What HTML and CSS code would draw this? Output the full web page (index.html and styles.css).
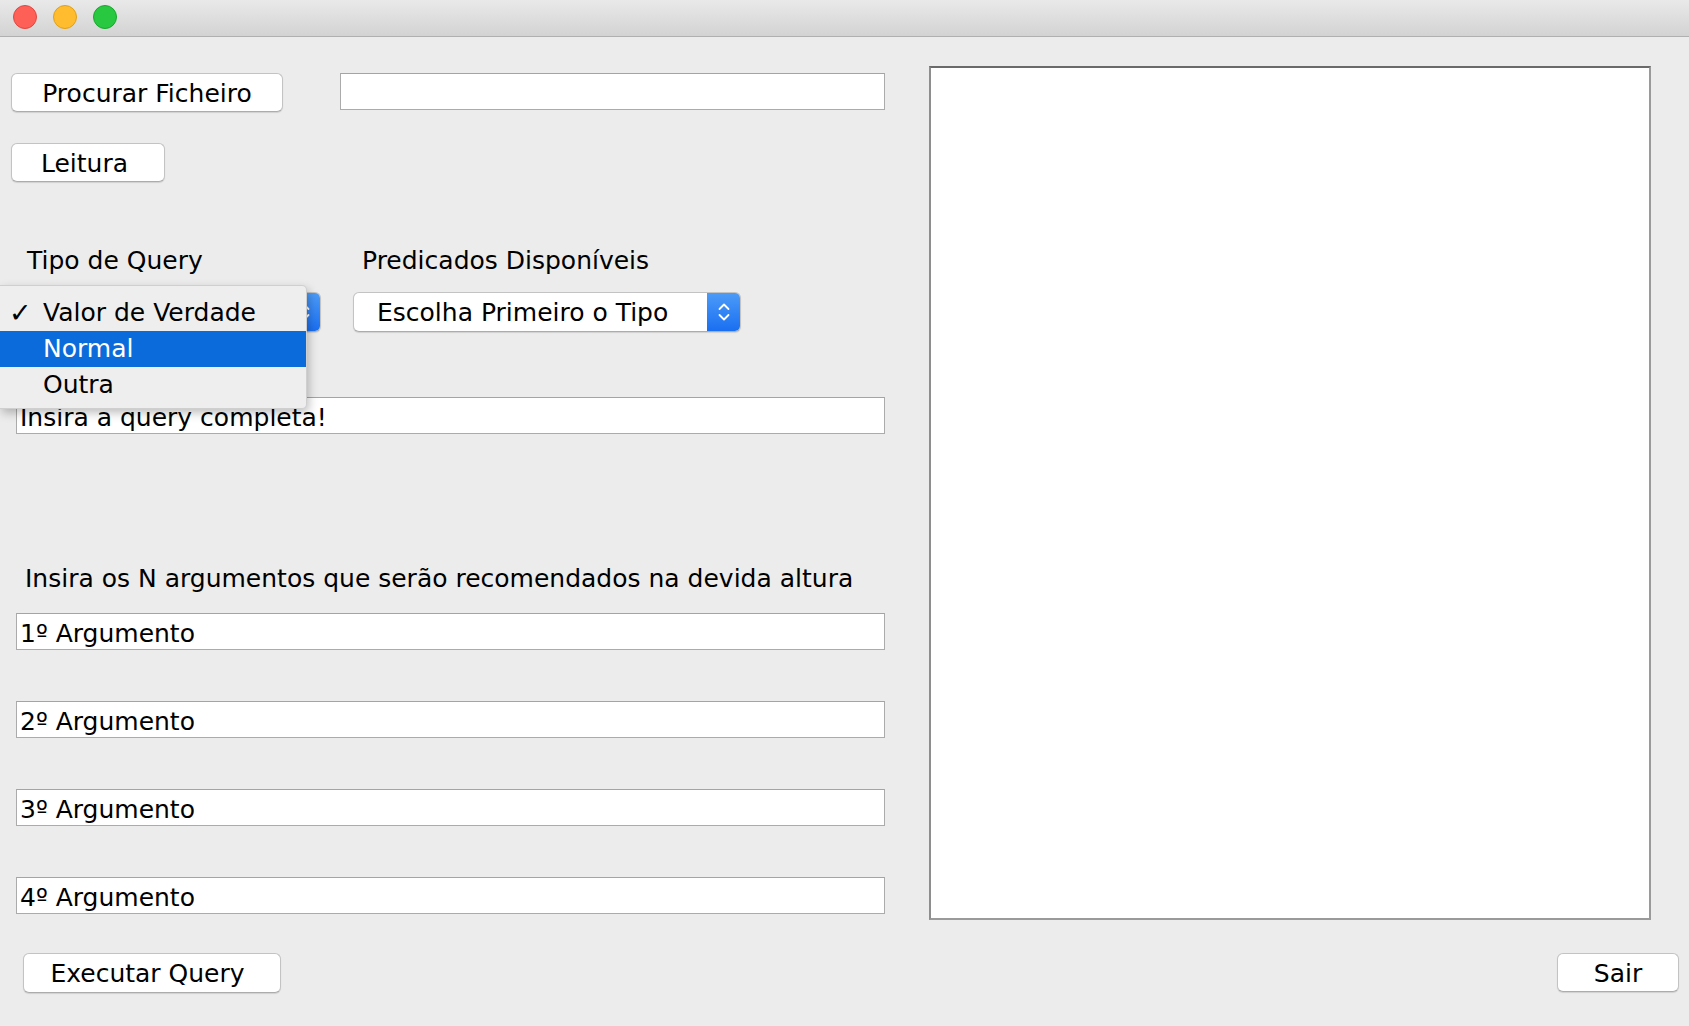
FILE: index.html
```html
<!DOCTYPE html>
<html>
<head>
<meta charset="utf-8">
<link rel="stylesheet" href="styles.css">
</head>
<body>
<div class="titlebar">
  <span class="light red"></span>
  <span class="light yellow"></span>
  <span class="light green"></span>
</div>
<div class="window">
  <div class="top">
    <div class="left">
      <div class="row1">
        <div class="btn btn-procurar">Procurar Ficheiro</div>
        <div class="field field-file"></div>
      </div>
      <div class="btn btn-leitura">Leitura</div>
      <div class="labels">
        <div class="label label-tipo">Tipo de Query</div>
        <div class="label label-pred">Predicados Disponíveis</div>
      </div>
      <div class="combos">
        <div class="combo combo-tipo">
          <span class="combo-text"></span>
          <span class="combo-arrow"><svg width="14" height="24" viewBox="0 0 14 24"><path d="M2.5 9 L7 4.5 L11.5 9 M2.5 15 L7 19.5 L11.5 15" fill="none" stroke="#fff" stroke-width="1.8" stroke-linecap="round" stroke-linejoin="round"/></svg></span>
        </div>
        <div class="combo combo-pred">
          <span class="combo-text">Escolha Primeiro o Tipo</span>
          <span class="combo-arrow"><svg width="14" height="24" viewBox="0 0 14 24"><path d="M2.5 9 L7 4.5 L11.5 9 M2.5 15 L7 19.5 L11.5 15" fill="none" stroke="#fff" stroke-width="1.8" stroke-linecap="round" stroke-linejoin="round"/></svg></span>
        </div>
      </div>
      <div class="field field-wide field-query">Insira a query completa!</div>
      <div class="label label-args">Insira os N argumentos que serão recomendados na devida altura</div>
      <div class="field field-wide field-arg first">1º Argumento</div>
      <div class="field field-wide field-arg">2º Argumento</div>
      <div class="field field-wide field-arg">3º Argumento</div>
      <div class="field field-wide field-arg">4º Argumento</div>
    </div>
    <div class="textarea"></div>
  </div>
  <div class="bottom">
    <div class="btn btn-exec">Executar Query</div>
    <div class="btn btn-sair">Sair</div>
  </div>
  <div class="popup">
    <div class="item"><span class="check">✓</span>Valor de Verdade</div>
    <div class="item selected">Normal</div>
    <div class="item">Outra</div>
  </div>
</div>
</body>
</html>
```
FILE: styles.css
```css
html, body {
  margin: 0;
  padding: 0;
}
body {
  background: #ececec;
  font-family: "DejaVu Sans", "Liberation Sans", sans-serif;
  font-size: 25px;
  color: #000;
  width: 1689px;
  height: 1026px;
  overflow: hidden;
}
.titlebar {
  height: 36px;
  border-bottom: 1px solid #b0b0b0;
  background: linear-gradient(#e9e9e9, #d3d3d3);
  display: flex;
  align-items: center;
  padding-left: 13px;
  padding-bottom: 0;
  gap: 16px;
  box-sizing: content-box;
}
.light {
  width: 22px;
  height: 22px;
  border-radius: 50%;
  display: block;
  margin-top: -3px;
}
.red { background: #fe5f57; border: 1px solid #e2463f; }
.yellow { background: #febc2e; border: 1px solid #e1a116; }
.green { background: #28c840; border: 1px solid #17a92b; }

.window {
  position: relative;
  height: 989px;
}
.top {
  display: flex;
  align-items: flex-start;
}
.left {
  width: 885px;
  display: flex;
  flex-direction: column;
  align-items: flex-start;
}
.btn {
  background: #fff;
  border: 1px solid #c3c3c3;
  border-bottom-color: #acacac;
  border-radius: 6px;
  box-shadow: 0 1px 1px rgba(0,0,0,0.12);
  height: 39px;
  box-sizing: border-box;
  display: flex;
  align-items: center;
  justify-content: center;
  line-height: 1;
  padding-bottom: 0;
  padding-top: 1px;
}
.row1 {
  margin-top: 36px;
  display: flex;
  align-items: flex-start;
}
.btn-procurar {
  margin-left: 11px;
  width: 272px;
}
.field {
  background: #fff;
  border: 1px solid #ababab;
  border-top-color: #a4a4a4;
  height: 37px;
  box-sizing: border-box;
  line-height: 35px;
  padding-left: 3px;
  padding-top: 2px;
  white-space: nowrap;
}
.field-file {
  margin-left: 57px;
  width: 545px;
}
.btn-leitura {
  margin-top: 31px;
  margin-left: 11px;
  width: 154px;
  padding-right: 7px;
}
.labels {
  margin-top: 64px;
  display: flex;
  height: 30px;
  line-height: 30px;
}
.label { white-space: nowrap; }
.label-tipo {
  margin-left: 27px;
  width: 335px;
}
.combos {
  margin-top: 16px;
  display: flex;
  align-items: flex-start;
}
.combo {
  background: #fff;
  border: 1px solid #c3c3c3;
  border-bottom-color: #acacac;
  border-radius: 6px;
  box-shadow: 0 1px 1px rgba(0,0,0,0.12);
  height: 40px;
  box-sizing: border-box;
  display: flex;
  align-items: center;
  overflow: hidden;
}
.combo-text {
  flex: 1;
  padding-left: 23px;
  padding-top: 1px;
  white-space: nowrap;
}
.combo-arrow {
  width: 33px;
  align-self: stretch;
  background: linear-gradient(#4c9bf8, #1a6ff1);
  display: flex;
  align-items: center;
  justify-content: center;
}
.combo-tipo {
  margin-left: 27px;
  width: 294px;
}
.combo-pred {
  margin-left: 32px;
  width: 388px;
}
.field-wide {
  margin-left: 16px;
  width: 869px;
}
.field-query {
  margin-top: 65px;
}
.label-args {
  margin-top: 129px;
  margin-left: 25px;
  height: 30px;
  line-height: 32px;
}
.field-arg { margin-top: 51px; }
.field-arg.first { margin-top: 20px; }

.textarea {
  margin-top: 29px;
  margin-left: 44px;
  width: 722px;
  height: 854px;
  box-sizing: border-box;
  background: #fff;
  border: 2px solid #9a9a9a;
  border-top-color: #6a6a6a;
  border-left-color: #8e8e8e;
}
.bottom {
  margin-top: 33px;
  display: flex;
  justify-content: space-between;
}
.btn-exec {
  margin-left: 23px;
  width: 258px;
  height: 40px;
  padding-right: 9px;
}
.btn-sair {
  margin-right: 10px;
  width: 122px;
}

.popup {
  position: absolute;
  left: 0;
  top: 248px;
  width: 307px;
  height: 124px;
  box-sizing: border-box;
  padding-top: 9px;
  background: #eeeeee;
  border: 1px solid #cfcfcf;
  border-left: none;
  border-radius: 0 5px 5px 0;
  box-shadow: 2px 4px 10px rgba(0,0,0,0.25);
}
.item {
  height: 36px;
  line-height: 36px;
  padding-left: 43px;
  position: relative;
  white-space: nowrap;
}
.item.selected {
  background: #0b6bdb;
  color: #fff;
}
.check {
  position: absolute;
  left: 9px;
  top: 0;
  font-size: 27px;
  font-weight: bold;
}
```
